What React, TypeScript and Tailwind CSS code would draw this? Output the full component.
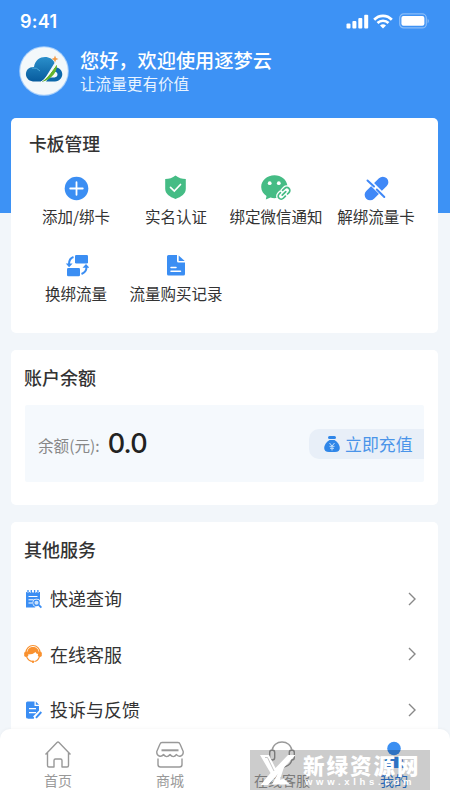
import type { ReactNode } from 'react';

function StatusBar() {
  return (
    <div className="flex h-[42px] items-center justify-between pl-[20px] pr-[20px]">
      <span className="pt-[2px] font-['Inter'] text-[18px] font-semibold leading-[42px] tracking-[0.3px]">9:41</span>
      <div className="flex items-center">
        <svg width="23" height="15" viewBox="0 0 23 15" fill="white">
          <rect x="0.5" y="9.500" width="4" height="5" rx="1" />
          <rect x="6.400" y="7" width="4" height="7.500" rx="1" />
          <rect x="12.300" y="4" width="4" height="10.500" rx="1" />
          <rect x="18.200" y="0.800" width="4" height="13.700" rx="1" />
        </svg>
        <svg className="ml-[4px]" width="20" height="15" viewBox="0 0 20 15" fill="none" stroke="white" strokeWidth="2.700">
          <path d="M1.200 5.700C6 .6 14 .6 18.800 5.700" />
          <path d="M4.500 9C7.500 6 12.500 6 15.500 9" />
          <path d="M7 11.500Q10 9 13 11.500L10 14.400Z" fill="white" stroke="none" />
        </svg>
        <svg className="ml-[6px]" width="31" height="16" viewBox="0 0 31 16">
          <rect x="0.700" y="0.900" width="26.600" height="14" rx="4" fill="none" stroke="white" strokeOpacity=".4" strokeWidth="1.200" />
          <rect x="2.400" y="3" width="23" height="9.800" rx="2" fill="white" />
          <path d="M28.700 5.500q2 2.500 0 5z" fill="white" fillOpacity=".5" />
        </svg>
      </div>
    </div>
  );
}

function Logo() {
  return (
    <svg width="50" height="50" viewBox="0 0 50 50">
      <defs>
        <linearGradient id="cloud" x1="0" y1="0" x2="0" y2="1">
          <stop offset="0" stopColor="#2a8fcb" />
          <stop offset="1" stopColor="#075b9d" />
        </linearGradient>
      </defs>
      <circle cx="25" cy="25" r="24.800" fill="#a9d0fb" />
      <circle cx="25" cy="25" r="23.800" fill="#f3f8fb" />
      <path d="M14 35.500C4 34 5 20.500 15 21c2-13 18-12 20.500-4L24 35.500Z" fill="url(#cloud)" />
      <path d="M13 22q5-1 8 3" fill="none" stroke="#5cb5e2" strokeWidth=".8" />
      <path d="M36 21c10 1.500 9.500 13.500 0 14.500h-9l3-4h5.500c4-.5 4-5.500 0-6z" fill="#0d68aa" />
      <path d="M22.500 36C30 31 33 24 38 18c.5 7-4 15-15.500 18Z" fill="#63b32e" />
      <path d="M22 36C30 30 33 24 38 18" fill="none" stroke="white" strokeWidth="1" />
      <path d="m36 9.500 1 2.500 2.500 1-2.500 1-1 2.500-1-2.500-2.500-1 2.500-1z" fill="#f39a48" />
    </svg>
  );
}

const actions: { label: string; icon: ReactNode }[] = [
  {
    label: '添加/绑卡',
    icon: (
      <svg width="26" height="26" viewBox="0 0 26 26">
        <circle cx="13.500" cy="13.500" r="11.800" fill="#3b8ef3" />
        <path d="M13.500 7.200v12.600M7.200 13.500h12.600" stroke="white" strokeWidth="1.800" strokeLinecap="round" />
      </svg>
    ),
  },
  {
    label: '实名认证',
    icon: (
      <svg width="26" height="26" viewBox="0 0 26 26">
        <path d="M12.500.5Q17 4 22.800 4v9.800c0 5-4.300 8-10.300 10.200C6.500 21.800 2.200 18.800 2.200 13.800V4Q8 4 12.500.5Z" fill="#45bc85" />
        <path d="m7.500 12.300 3.800 3.700 6.200-6.500" fill="none" stroke="white" strokeWidth="1.700" strokeLinecap="round" />
      </svg>
    ),
  },
  {
    label: '绑定微信通知',
    icon: (
      <svg width="30" height="26" viewBox="0 0 30 26">
        <path d="M13.500.3C6 .3.200 5.500.200 12c0 4 2.300 7 5.300 9l-.7 3.500 4.700-2c2 .7 4 .8 6.500.5l10.500-11.500C26 4.500 20 .3 13.500.3Z" fill="#45bc85" />
        <circle cx="8.700" cy="8.200" r="1.900" fill="white" />
        <circle cx="17.800" cy="8.200" r="1.900" fill="white" />
        <g transform="translate(23 18.300) rotate(-45)" fill="none" strokeLinecap="round">
          <path d="M-1 3h-3a3 3 0 0 1 0-6h2M1-3h3a3 3 0 0 1 0 6H2M-2.500 0h5" stroke="white" strokeWidth="4.200" />
          <path d="M-1 3h-3a3 3 0 0 1 0-6h2M1-3h3a3 3 0 0 1 0 6H2M-2.500 0h5" stroke="#45bc85" strokeWidth="1.700" />
        </g>
      </svg>
    ),
  },
  {
    label: '解绑流量卡',
    icon: (
      <svg width="26" height="26" viewBox="0 0 26 26" fill="#4088f7">
        <g transform="translate(13.500 13.500) rotate(-45)">
          <path d="M1.500-5.500h7.500a5.500 5.500 0 0 1 0 11H1.500zM-1.500-5.500h-7.500a5.500 5.500 0 0 0 0 11H-1.500z" />
        </g>
        <path d="m3 3 20 20" stroke="white" strokeWidth="4.500" />
        <path d="m4.500 5.500 6.500 6M13.800 14.500l7.500 7.500" stroke="#4088f7" strokeWidth="2" strokeLinecap="round" />
      </svg>
    ),
  },
  {
    label: '换绑流量',
    icon: (
      <svg width="26" height="26" viewBox="0 0 26 26" fill="#3b8ef3">
        <rect x="12" y="3" width="13" height="8.500" rx="1.300" />
        <rect x="4" y="16" width="13" height="8.300" rx="1.300" />
        <path d="M10.500 5Q6 6.500 6 12M18.500 22q5-2 5-7" fill="none" stroke="#3b8ef3" strokeWidth="2" />
        <path d="M2.800 11.500h6.800l-3.500 3.800zM19.500 15.800l3.500-3.800 3.500 3.800z" />
      </svg>
    ),
  },
  {
    label: '流量购买记录',
    icon: (
      <svg width="26" height="26" viewBox="0 0 26 26">
        <path d="M5.500 3H14v6q0 1.500 1.500 1.500H22v11.500a1.500 1.500 0 0 1-1.500 1.500H5.500A1.500 1.500 0 0 1 4 22V4.500A1.500 1.500 0 0 1 5.500 3Z" fill="#3b8ef3" />
        <path d="m15.700 3.500 6 5.500h-6z" fill="#3b8ef3" />
        <path d="M8 15.500h5M8 19.300h9.500" stroke="white" strokeWidth="1.500" strokeLinecap="round" />
      </svg>
    ),
  },
];

const services: { label: string; icon: ReactNode }[] = [
  {
    label: '快递查询',
    icon: (
      <svg width="18" height="20" viewBox="0 0 18 20">
        <path d="M2 3h14v8.500L11 18.500H2z" fill="#3b8ef3" />
        <path d="M4 1v3M7.300 1v3M10.600 1v3M13.900 1v3" stroke="white" strokeWidth="2.200" />
        <path d="M4 1v3M7.300 1v3M10.600 1v3M13.900 1v3" stroke="#3b8ef3" strokeWidth="1.300" />
        <path d="M4.500 7.500h9M4.500 10.800h5M4.500 14h4" stroke="white" strokeWidth="1" />
        <circle cx="12.500" cy="13.800" r="4" fill="white" />
        <circle cx="12.500" cy="13.800" r="2.700" fill="#cfe4fc" stroke="#3b8ef3" strokeWidth="1.300" />
        <path d="m14.800 16 2.600 2.600" stroke="#3b8ef3" strokeWidth="1.800" />
      </svg>
    ),
  },
  {
    label: '在线客服',
    icon: (
      <svg width="18" height="20" viewBox="0 0 18 20">
        <path d="M2 8.500a7 7 0 0 1 14 0" fill="none" stroke="#f9912f" strokeWidth="1.200" />
        <path d="M3.200 12V8.500C3.200 1 14.800 1 14.800 8.500V12Z" fill="#f9912f" />
        <rect x="0.200" y="7.500" width="4" height="5.500" rx="1.800" fill="#f9912f" />
        <rect x="13.800" y="7.500" width="4" height="5.500" rx="1.800" fill="#f9912f" />
        <path d="M4 10.500q5 0 7.500-2.500Q12 10 14 10c0 8-9 8-10 .5Z" fill="white" />
        <path d="M2.500 12.500q2 5 6.500 5M15.500 12.500q-1.500 4.500-5 5" fill="none" stroke="#f9912f" strokeWidth="1.100" />
        <circle cx="9" cy="17.800" r="1.200" fill="#f9912f" />
      </svg>
    ),
  },
  {
    label: '投诉与反馈',
    icon: (
      <svg width="18" height="20" viewBox="0 0 18 20">
        <path d="M3.500 1.500h7v4.500h4.500V12L9.500 18.500h-6A1.500 1.500 0 0 1 2 17V3A1.500 1.500 0 0 1 3.500 1.500ZM11.800 1.500l3.200 3.200h-3.200z" fill="#3b8ef3" />
        <path d="M5 8.700h7M5 12.700h7" stroke="white" strokeWidth="1.200" />
        <path d="m10.500 18 7-7" stroke="white" strokeWidth="4" />
        <path d="m12 17.800 5.300-5.800" stroke="#3b8ef3" strokeWidth="1.900" />
        <path d="M4 18h6" stroke="#3b8ef3" />
      </svg>
    ),
  },
];

const tabs: { label: string; active?: boolean; icon: ReactNode }[] = [
  {
    label: '首页',
    icon: <path d="M1.500 14.500 13 2.500q1-1 2 0l11.500 12M3.500 13v12.500q0 1.500 1.500 1.500H10v-6.500q0-1.500 1.500-1.500h5q1.500 0 1.500 1.500V27h5q1.500 0 1.500-1.500V13" />,
  },
  {
    label: '商城',
    icon: (
      <>
        <path d="M6 2.500h16q1.500 0 2 1.500l3.200 7.500c.5 5-4.800 6-6.700 3-2 2.800-4.500 2.800-6.500 0-2 2.800-4.500 2.800-6.500 0-2 3-7.200 2-6.700-3L4 4q.5-1.500 2-1.500Z" />
        <path d="M5.500 10.300h17" strokeWidth="2" />
        <path d="M2 18.500V24.500q0 2.500 2.500 2.500h19Q26 27 26 24.500v-6" />
      </>
    ),
  },
  {
    label: '在线客服',
    icon: (
      <>
        <path d="M4 11C5-1 23-1 24 11M24 19q-1 7-9 8" />
        <rect x="1.700" y="10" width="5" height="10" rx="2.500" />
        <rect x="21.300" y="10" width="5" height="10" rx="2.500" />
      </>
    ),
  },
  {
    label: '我的',
    active: true,
    icon: (
      <g fill="#3b8ff2" stroke="none">
        <circle cx="14" cy="8.500" r="6.800" />
        <path d="M4.500 28v-5q0-6 6-6h7q6 0 6 6v5z" />
      </g>
    ),
  },
];

function Watermark() {
  return (
    <div className="absolute left-[250px] top-[750px] flex h-[40px] w-[180px] bg-black/20 text-white">
      <svg className="ml-[9px] mt-[4px] shrink-0" width="40" height="32" viewBox="0 0 40 32" fill="white">
        <path d="M1 1h9l6.500 13L29 1h7.500L9 31H1.500l10-12z" />
        <path d="m22 14 4-4-5 15.500 4-.5 6 5.500H13z" />
        <path d="M6 3.500h2.500L15 17" fill="none" stroke="#b9b9b9" strokeWidth=".8" />
      </svg>
      <div className="ml-[4px] w-[124px] whitespace-nowrap">
        <div className="mt-[3px] text-[21.500px] font-black leading-[24px] tracking-[2px]">新绿资源网</div>
        <div className="pl-[2px] font-['Liberation_Sans'] text-[9.500px] font-bold leading-[10px] tracking-[3.700px]">www.xlhs.com</div>
      </div>
    </div>
  );
}

export default function App() {
  return (
    <div className="relative flex h-[800px] w-[450px] flex-col overflow-hidden bg-[#f2f6fa] font-['Noto_Sans_CJK_SC',sans-serif] text-[#333]">
      <header className="h-[213px] shrink-0 bg-[#3d92f5] text-white">
        <StatusBar />
        <div className="flex pl-[19px] pt-[4px]">
          <Logo />
          <div className="ml-[11px]">
            <div className="mt-px text-[19.200px] font-medium leading-[26px]">您好，欢迎使用逐梦云</div>
            <div className="text-[15.600px] leading-[21px] text-[#e9f4ff]">让流量更有价值</div>
          </div>
        </div>
      </header>

      <main className="-mt-[95px] ml-[11px] mr-[12px] flex flex-col gap-[17px]">
        <section className="h-[215px] rounded-[5px] bg-white px-[15px] pt-[13px]">
          <h2 className="pl-[3px] text-[17.800px] font-medium leading-[24px]">卡板管理</h2>
          <div className="mr-[-3px] mt-[20px] grid grid-cols-4">
            {actions.map((item) => (
              <div key={item.label} className="flex h-[77px] flex-col items-center">
                <div className="flex h-[26px] items-center">{item.icon}</div>
                <span className="mt-[3px] whitespace-nowrap text-[15.500px] leading-[24px]">{item.label}</span>
              </div>
            ))}
          </div>
        </section>

        <section className="h-[155px] rounded-[5px] bg-white px-[14px] pt-[15px]">
          <h2 className="-ml-px text-[18px] font-medium leading-[24px]">账户余额</h2>
          <div className="mt-[16px] flex h-[77px] items-center rounded-[2px] bg-[#f5f9fd] pl-[13px]">
            <span className="mt-[4px] text-[15.600px] text-[#888]">余额(元):</span>
            <span className="ml-[8px] font-['Inter'] text-[27px] font-medium leading-[40px] tracking-[-0.8px] text-[#222]">0.0</span>
            <button className="ml-auto flex h-[30px] w-[115px] items-center rounded-l-[10px] bg-[#e8eff8] pl-[15px] text-[16.900px] text-[#4a94e9]">
              <svg width="16" height="18" viewBox="0 0 16 18">
                <rect x="4" y="1" width="8" height="3" rx="1.500" fill="#2f86e8" />
                <path d="M5.500 5h5C17 9 18 17 11 17H5C-2 17-1 9 5.500 5Z" fill="#2f86e8" />
                <path d="m5.500 8 2.500 3 2.500-3M8 11v4.500M5.500 11.300h5M6 13.300h4" fill="none" stroke="#c4dffb" />
              </svg>
              <span className="ml-[5px] whitespace-nowrap">立即充值</span>
            </button>
          </div>
        </section>

        <section className="h-[240px] rounded-[5px] bg-white px-[13px] pt-[15px]">
          <h2 className="text-[18px] font-medium leading-[24px]">其他服务</h2>
          <div className="mt-[10px]">
            {services.map((item) => (
              <div key={item.label} className="flex h-[55.500px] items-center">
                {item.icon}
                <span className="-mt-px ml-[8px] text-[18px] leading-[26px]">{item.label}</span>
                <svg className="ml-auto mr-[8px]" width="10" height="14" viewBox="0 0 10 14" fill="none" stroke="#888" strokeWidth="1.400">
                  <path d="m2 1 6 6-6 6" />
                </svg>
              </div>
            ))}
          </div>
        </section>
      </main>

      <nav className="absolute inset-x-0 bottom-0 grid h-[71px] grid-cols-4 rounded-t-[10px] bg-white pl-[2px] pt-[11px] shadow-[0_-1px_3px_rgba(0,0,0,0.03)]">
        {tabs.map((tab) => (
          <div key={tab.label} className={tab.active ? 'flex flex-col items-center text-[#2f7fe0]' : 'flex flex-col items-center text-[#999]'}>
            <svg width="28" height="30" viewBox="0 0 28 30" fill="none" stroke="currentColor" strokeWidth="1.400" strokeLinejoin="round">
              {tab.icon}
            </svg>
            <span className="-mt-px text-[14px] leading-[22px]">{tab.label}</span>
          </div>
        ))}
      </nav>
      <Watermark />
    </div>
  );
}
